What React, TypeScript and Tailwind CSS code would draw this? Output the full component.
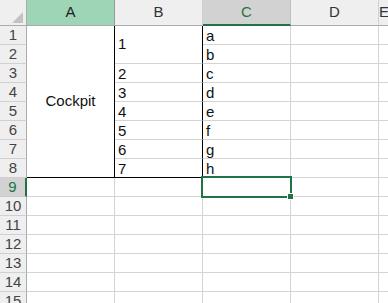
import React from "react";

const cols = ["A", "B", "C", "D", "E"];
const rowCount = 16;
const letters = ["a", "b", "c", "d", "e", "f", "g", "h"];

const grid = "border-r border-b border-[#d4d4d4]";
const cellText = "flex items-end pl-[3px] leading-[17px] text-[15px] text-[#111] overflow-hidden whitespace-nowrap";

export default function App() {
    const cells: React.ReactNode[] = [];

    // header row
    cells.push(
        <div key="corner" className="relative bg-[#efefef] border-r border-b border-[#ababab]">
            <svg className="absolute right-[3px] bottom-[2px]" width="11" height="11" viewBox="0 0 11 11">
                <polygon points="11,0 11,11 0,11" fill="#c3c3c3" />
            </svg>
        </div>
    );
    cols.forEach((c) => {
        let cls = "bg-[#efefef] text-[#333] border-b border-b-[#ababab] border-r border-r-[#d0d0d0]";
        if (c === "A") cls = "bg-[#9fd5b7] text-[#1e1e1e] border-b border-b-[#ababab] border-r border-r-[#9a9a9a]";
        if (c === "C") cls = "bg-[#d2d2d2] text-[#217346] border-b-2 border-b-[#217346] border-r border-r-[#c0c0c0]";
        cells.push(
            <div key={"h" + c} className={`flex items-center justify-center text-[15px] ${cls}`}>
                {c}
            </div>
        );
    });

    for (let r = 1; r <= rowCount; r++) {
        const rh =
            r === 9
                ? "bg-[#d2d2d2] text-[#217346] border-r-2 border-r-[#217346] border-b border-b-[#c8c8c8]"
                : "bg-[#efefef] text-[#444] border-r border-r-[#ababab] border-b border-b-[#d0d0d0]";
        cells.push(
            <div key={"r" + r} className={`flex items-center justify-center text-[15px] ${rh}`}>
                {r}
            </div>
        );

        // column A
        if (r === 1) {
            cells.push(
                <div key="A1" className="row-span-8 flex items-center justify-center text-[15px] text-[#111] border-r border-b border-black">
                    Cockpit
                </div>
            );
        } else if (r > 8) {
            cells.push(<div key={"A" + r} className={grid} />);
        }

        // column B
        if (r === 1) {
            cells.push(
                <div key="B1" className="row-span-2 flex items-center pl-[3px] text-[15px] text-[#111] border-r border-r-black border-b border-b-[#d4d4d4]">
                    1
                </div>
            );
        } else if (r >= 3 && r <= 8) {
            const b = r === 8 ? "border-r border-b border-black" : "border-r border-r-black border-b border-b-[#d4d4d4]";
            cells.push(
                <div key={"B" + r} className={`${cellText} ${b}`}>
                    {r - 1}
                </div>
            );
        } else if (r > 8) {
            cells.push(<div key={"B" + r} className={grid} />);
        }

        // column C
        if (r <= 8) {
            cells.push(
                <div key={"C" + r} className={`${cellText} ${grid}`}>
                    {letters[r - 1]}
                </div>
            );
        } else if (r === 9) {
            cells.push(
                <div key="C9" className={`relative ${grid}`}>
                    <div className="absolute -inset-0.5 z-10 border-2 border-[#217346]">
                        <div className="absolute -right-[4px] -bottom-[4px] w-[7px] h-[7px] bg-[#217346] border border-white" />
                    </div>
                </div>
            );
        } else {
            cells.push(<div key={"C" + r} className={grid} />);
        }

        cells.push(<div key={"D" + r} className={grid} />);
        cells.push(<div key={"E" + r} className={grid} />);
    }

    return (
        <div className="w-[388px] h-[303px] overflow-hidden bg-white" style={{fontFamily: '"Liberation Sans", Arial, sans-serif'}}>
            <div className="grid grid-cols-[27px_88px_88px_88px_88px_1fr] grid-rows-[26px_repeat(16,19px)]">
                {cells}
            </div>
        </div>
    );
}
